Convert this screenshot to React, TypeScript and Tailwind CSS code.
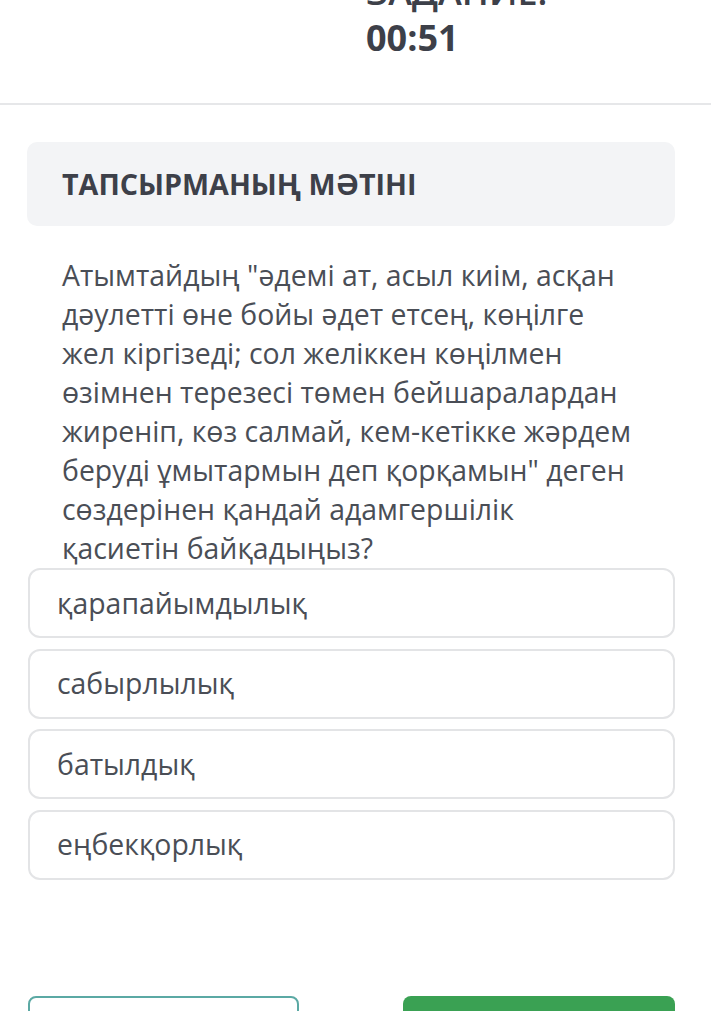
import React from "react";

const lines = [
  "Атымтайдың \"әдемі ат, асыл киім, асқан",
  "дәулетті өне бойы әдет етсең, көңілге",
  "жел кіргізеді; сол желіккен көңілмен",
  "өзімнен терезесі төмен бейшаралардан",
  "жиреніп, көз салмай, кем-кетікке жәрдем",
  "беруді ұмытармын деп қорқамын\" деген",
  "сөздерінен қандай адамгершілік",
  "қасиетін байқадыңыз?",
];

const options = ["қарапайымдылық", "сабырлылық", "батылдық", "еңбекқорлық"];

export default function App() {
  return (
    <div
      className="w-[711px] h-[1011px] overflow-hidden bg-white text-[#40444c]"
      style={{ fontFamily: '"Open Sans", "Noto Sans", sans-serif' }}
    >
      <header className="h-[105px] border-b-2 border-[#e6e7e9] overflow-hidden">
        <div className="ml-[366px] -mt-[30px] flex flex-col">
          <div className="text-[36px] leading-[44px] font-semibold text-[#3d4049]">ЗАДАНИЕ:</div>
          <div className="text-[36px] leading-[44px] font-bold text-[#3d4049] mt-[2px]">00:51</div>
        </div>
      </header>

      <div className="pl-[27px] pr-[36px] pt-[37px]">
        <div className="h-[84px] rounded-[10px] bg-[#f3f4f6] flex items-center pl-[35px]">
          <h2 className="text-[28.7px] font-bold text-[#3d4049]">ТАПСЫРМАНЫҢ МӘТІНІ</h2>
        </div>

        <p className="mt-[30px] pl-[35px] text-[28.4px] leading-[39px] text-[#4a4e56]">
          {lines.map((l, i) => (
            <React.Fragment key={i}>
              {l}
              {i < lines.length - 1 && <br />}
            </React.Fragment>
          ))}
        </p>

        <div className="flex flex-col gap-[10.5px] pl-[1px]">
          {options.map((o) => (
            <div
              key={o}
              className="h-[70px] rounded-[12px] border-2 border-[#e3e4e6] flex items-center pl-[27px] text-[28.4px] text-[#4a4e56]"
            >
              {o}
            </div>
          ))}
        </div>

        <div className="mt-[116px] flex justify-between pl-[1px]">
          <div className="w-[271px] h-[60px] rounded-[8px] border-2 border-[#5ba9a4] bg-white" />
          <div className="w-[272px] h-[60px] rounded-[8px] bg-[#3aa153]" />
        </div>
      </div>
    </div>
  );
}
